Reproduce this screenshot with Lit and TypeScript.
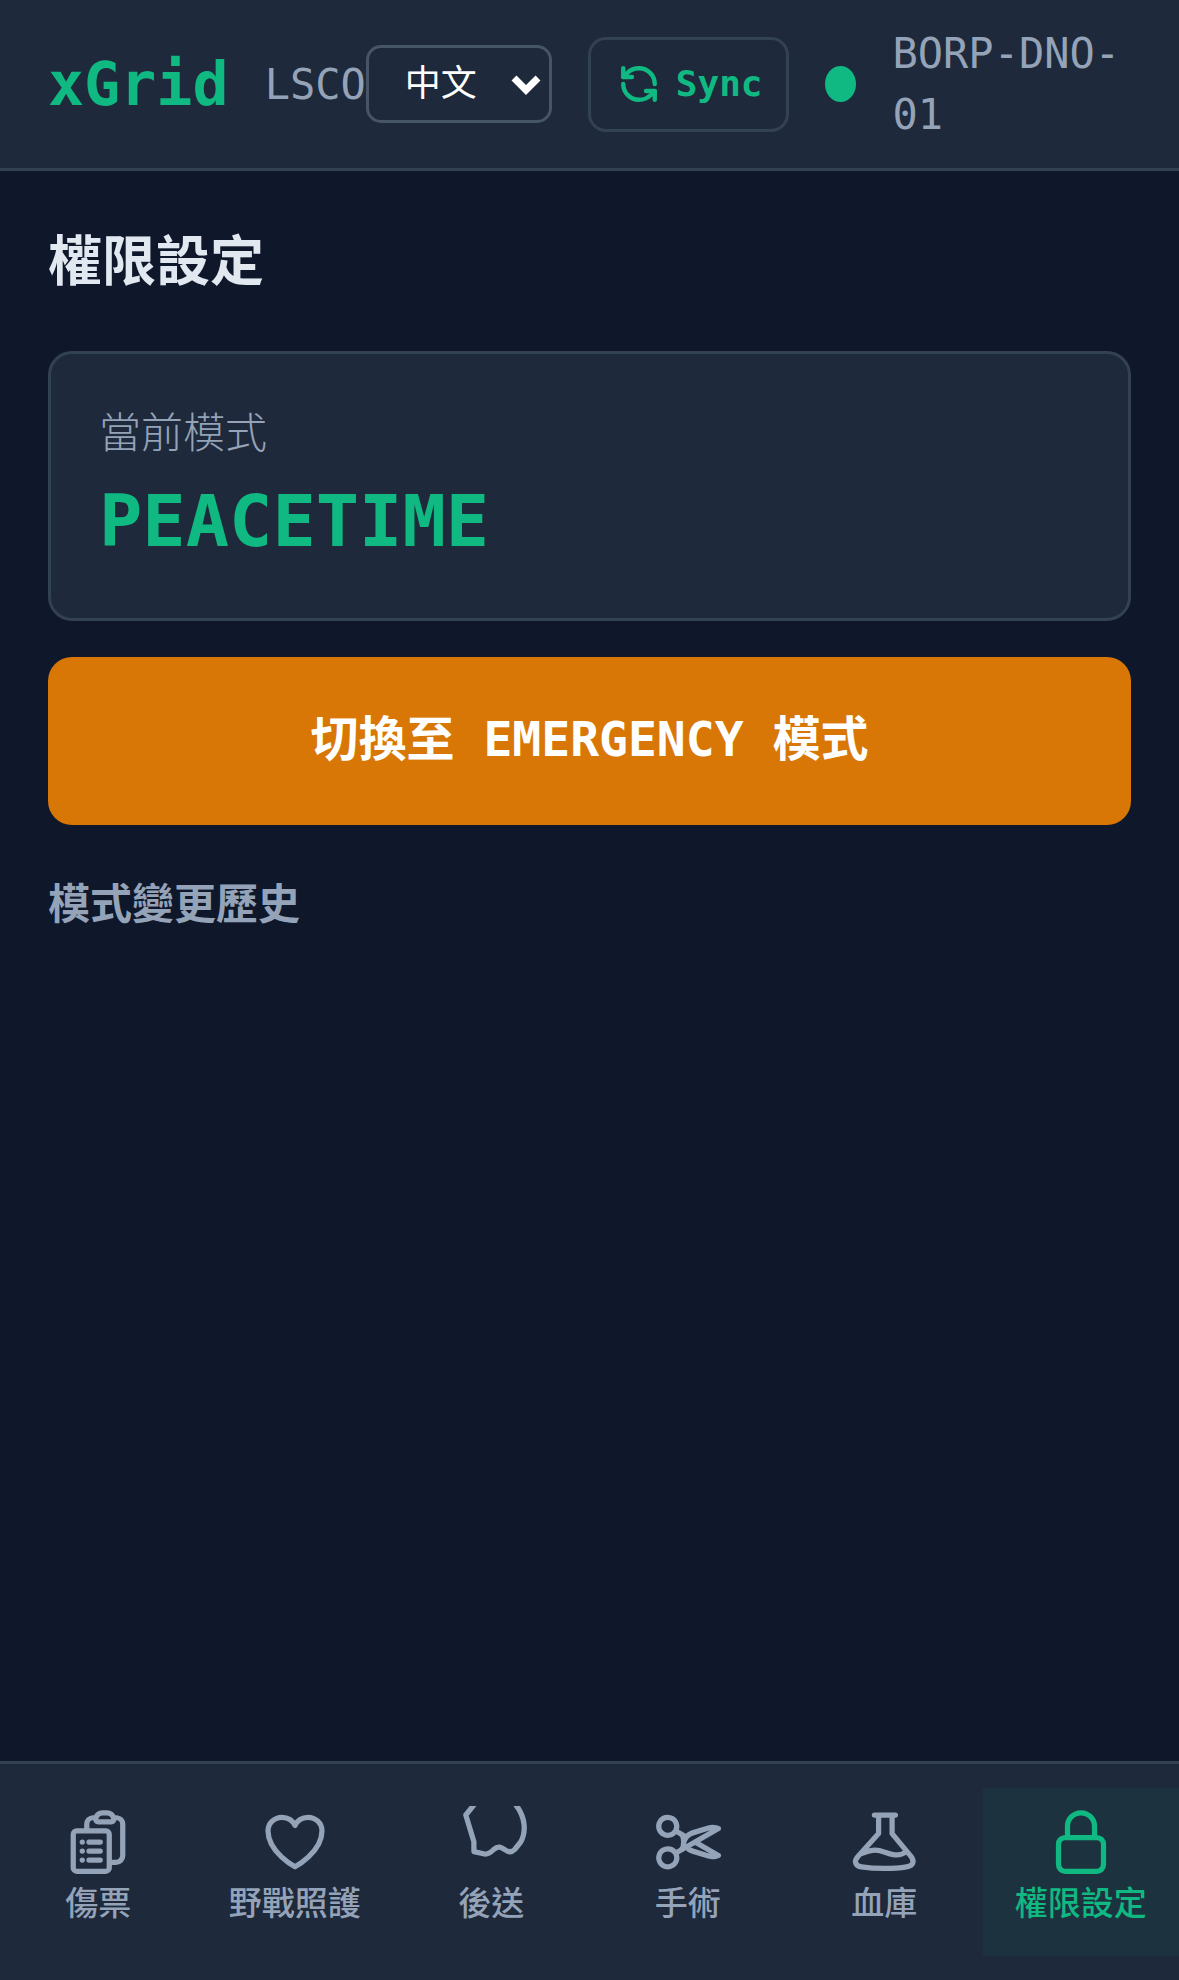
import { LitElement, html, css, svg } from "lit";
import { customElement, state } from "lit/decorators.js";

const tabs = [
    {
        label: "傷票",
        icon: svg`<path d="M9 12h3.75M9 15h3.75M9 18h3.75m3 .75H18a2.25 2.25 0 0 0 2.25-2.25V6.108c0-1.135-.845-2.098-1.976-2.192a48.424 48.424 0 0 0-1.123-.08m-5.801 0c-.065.21-.1.433-.1.664 0 .414.336.75.75.75h4.5a.75.75 0 0 0 .75-.75 2.25 2.25 0 0 0-.1-.664m-5.8 0A2.251 2.251 0 0 1 13.5 2.25H15c1.012 0 1.867.668 2.15 1.586m-5.8 0c-.376.023-.75.05-1.124.08C9.095 4.01 8.25 4.973 8.25 6.108V8.25m0 0H4.875c-.621 0-1.125.504-1.125 1.125v11.25c0 .621.504 1.125 1.125 1.125h9.75c.621 0 1.125-.504 1.125-1.125V9.375c0-.621-.504-1.125-1.125-1.125H8.25ZM6.75 12h.008v.008H6.75V12Zm0 3h.008v.008H6.75V15Zm0 3h.008v.008H6.75V18Z"/>`,
    },
    {
        label: "野戰照護",
        icon: svg`<path d="M21 8.25c0-2.485-2.099-4.5-4.688-4.5-1.935 0-3.597 1.126-4.312 2.733-.715-1.607-2.377-2.733-4.313-2.733C5.1 3.75 3 5.765 3 8.25c0 7.22 9 12 9 12s9-4.78 9-12Z"/>`,
    },
    {
        // the original icon runs off the top of its box, so it stays clipped
        label: "後送",
        icon: svg`<path d="M6.4-.5 3.6 3l2.7 8.9v3.3l3.2.7c1.5.5 2.7-.7 3.4-1.4 1.5-1.4 2.6-.7 3.6 0 1.2.9 2.4 1 3.4 0l2-2.5c1.7-3 1.9-8-1.7-12.5"/>`,
    },
    {
        label: "手術",
        icon: svg`<path d="m7.848 8.25 1.536.887M7.848 8.25a3 3 0 1 1-5.196-3 3 3 0 0 1 5.196 3Zm1.536.887a2.165 2.165 0 0 1 1.083 1.839c.005.351.054.695.14 1.024M9.384 9.137l2.077 1.199M7.848 15.75l1.536-.887m-1.536.887a3 3 0 1 1-5.196 3 3 3 0 0 1 5.196-3Zm1.536-.887a2.165 2.165 0 0 0 1.083-1.838c.005-.352.054-.695.14-1.025m-1.223 2.863 2.077-1.199m0-3.328a4.323 4.323 0 0 1 2.068-1.379l5.325-1.628a4.5 4.5 0 0 1 2.48-.044l.803.215-7.794 4.5m-2.882-1.664A4.33 4.33 0 0 0 10.607 12m3.736 0 7.794 4.5-.802.215a4.5 4.5 0 0 1-2.48-.043l-5.326-1.629a4.324 4.324 0 0 1-2.068-1.379M14.343 12l-2.882 1.664"/>`,
    },
    {
        label: "血庫",
        icon: svg`<path d="M8.8 3h7M10.2 3v6.2L3.3 16.8c-1.5 1.7-.8 3.2 1.2 3.5 4.5.7 11 .7 15 0 2.2-.3 2.8-1.8 1.5-3.5l-6.3-7.6V3M4.7 15.8c1.5-.6 3-1.1 4.4-1.1 2.4 0 4.6 1.6 7.2 1.6 1.2 0 2.2-.4 3.3-1.1"/>`,
    },
    {
        label: "權限設定",
        icon: svg`<path d="M16.5 10.5V6.75a4.5 4.5 0 1 0-9 0v3.75m-.75 11.25h10.5a2.25 2.25 0 0 0 2.25-2.25v-6.75a2.25 2.25 0 0 0-2.25-2.25H6.75a2.25 2.25 0 0 0-2.25 2.25v6.75a2.25 2.25 0 0 0 2.25 2.25Z"/>`,
    },
];

@customElement("app-root")
export class AppRoot extends LitElement {
    @state() private activeTab = 5;

    static override styles = css`
        :host {
            display: flex;
            flex-direction: column;
            min-height: 100vh;
            background: #0f172a;
            font-family: "DejaVu Sans Mono", "Noto Sans CJK TC", monospace;
            line-height: 1.5;
        }

        header {
            display: flex;
            align-items: center;
            padding: 23px 48px;
            background: #1e293b;
            border-bottom: 3px solid #334155;
        }

        .brand {
            display: flex;
            align-items: center;
            gap: 36px;
            flex: none;
        }

        .logo {
            font-size: 60px;
            font-weight: 700;
            color: #10b981;
        }

        .site {
            font-size: 42px;
            color: #94a3b8;
        }

        .controls {
            display: flex;
            align-items: center;
            gap: 36px;
            flex: 1;
            min-width: 0;
        }

        .lang {
            position: relative;
            flex: none;
            display: flex;
        }

        select {
            appearance: none;
            width: 186px;
            height: 78px;
            padding: 0 36px;
            background: #1e293b;
            color: #fff;
            border: 3px solid #475569;
            border-radius: 15px;
            font: inherit;
            font-size: 36px;
        }

        .lang svg {
            position: absolute;
            right: 11px;
            top: 27px;
            width: 30px;
            height: 24px;
            pointer-events: none;
        }

        .sync {
            flex: none;
            display: flex;
            align-items: center;
            gap: 16px;
            height: 95px;
            box-sizing: border-box;
            padding: 0 24px 0 27px;
            background: none;
            border: 3px solid #334155;
            border-radius: 18px;
            color: #10b981;
            font: inherit;
            font-size: 36px;
            font-weight: 700;
        }

        .sync svg {
            width: 42px;
            height: 42px;
        }

        .dot {
            flex: none;
            width: 31px;
            height: 36px;
            border-radius: 50%;
            background: #10b981;
        }

        .station {
            flex: 1;
            min-width: 0;
            font-size: 42px;
            line-height: 61px;
            color: #94a3b8;
        }

        main {
            flex: 1;
            display: flex;
            flex-direction: column;
            padding: 51px 48px 48px;
        }

        h1 {
            margin: 0 0 48px;
            font-size: 54px;
            font-weight: 700;
            color: #e2e8f0;
        }

        .card {
            padding: 48px;
            background: #1e293b;
            border: 3px solid #334155;
            border-radius: 24px;
        }

        .card-label {
            font-size: 42px;
            font-weight: 300;
            color: #94a3b8;
        }

        .card-value {
            margin-top: 8px;
            font-size: 72px;
            font-weight: 700;
            line-height: 97px;
            color: #10b981;
        }

        .switch {
            margin-top: 36px;
            height: 168px;
            padding-bottom: 5px;
            background: #d97706;
            border: none;
            border-radius: 24px;
            color: #fff;
            font: inherit;
            font-size: 48px;
            font-weight: 700;
        }

        h2 {
            margin: 48px 0 0;
            font-size: 42px;
            font-weight: 700;
            color: #94a3b8;
        }

        nav {
            display: flex;
            padding: 24px 0;
            background: #1e293b;
            border-top: 3px solid #334155;
        }

        .tab {
            flex: 1;
            display: flex;
            flex-direction: column;
            align-items: center;
            gap: 1px;
            height: 168px;
            box-sizing: border-box;
            padding: 18px 0 0;
            background: none;
            border: none;
            color: #94a3b8;
            font: inherit;
            font-size: 33px;
            font-weight: 500;
        }

        .tab.active {
            background: rgba(16, 185, 129, 0.07);
            color: #10b981;
        }

        .tab svg {
            width: 72px;
            height: 72px;
            overflow: hidden;
        }
    `;

    override render() {
        return html`
            <header>
                <div class="brand">
                    <span class="logo">xGrid</span>
                    <span class="site">LSCO</span>
                </div>
                <div class="controls">
                    <div class="lang">
                        <select>
                            <option>中文</option>
                            <option>English</option>
                        </select>
                        <svg viewBox="0 0 30 24" fill="none" stroke="#fff" stroke-width="7">
                            <path d="M3 6l12 12L27 6" />
                        </svg>
                    </div>
                    <button class="sync">
                        <svg
                            viewBox="0 0 24 24"
                            fill="none"
                            stroke="currentColor"
                            stroke-width="2.5"
                            stroke-linecap="round"
                            stroke-linejoin="round"
                        >
                            <path d="M21 12a9 9 0 0 0-9-9 9.75 9.75 0 0 0-6.74 2.74L3 8" />
                            <path d="M3 3v5h5" />
                            <path d="M3 12a9 9 0 0 0 9 9 9.75 9.75 0 0 0 6.74-2.74L21 16" />
                            <path d="M16 16h5v5" />
                        </svg>
                        Sync
                    </button>
                    <span class="dot"></span>
                    <span class="station">BORP-DNO-01</span>
                </div>
            </header>
            <main>
                <h1>權限設定</h1>
                <section class="card">
                    <div class="card-label">當前模式</div>
                    <div class="card-value">PEACETIME</div>
                </section>
                <button class="switch">切換至 EMERGENCY 模式</button>
                <h2>模式變更歷史</h2>
            </main>
            <nav>
                ${tabs.map(
                    (tab, i) => html`
                        <button
                            class="tab ${i === this.activeTab ? "active" : ""}"
                            @click="${() => (this.activeTab = i)}"
                        >
                            <svg
                                viewBox="0 0 24 24"
                                fill="none"
                                stroke="currentColor"
                                stroke-width="1.75"
                                stroke-linecap="round"
                                stroke-linejoin="round"
                            >
                                ${tab.icon}
                            </svg>
                            ${tab.label}
                        </button>
                    `,
                )}
            </nav>
        `;
    }
}
